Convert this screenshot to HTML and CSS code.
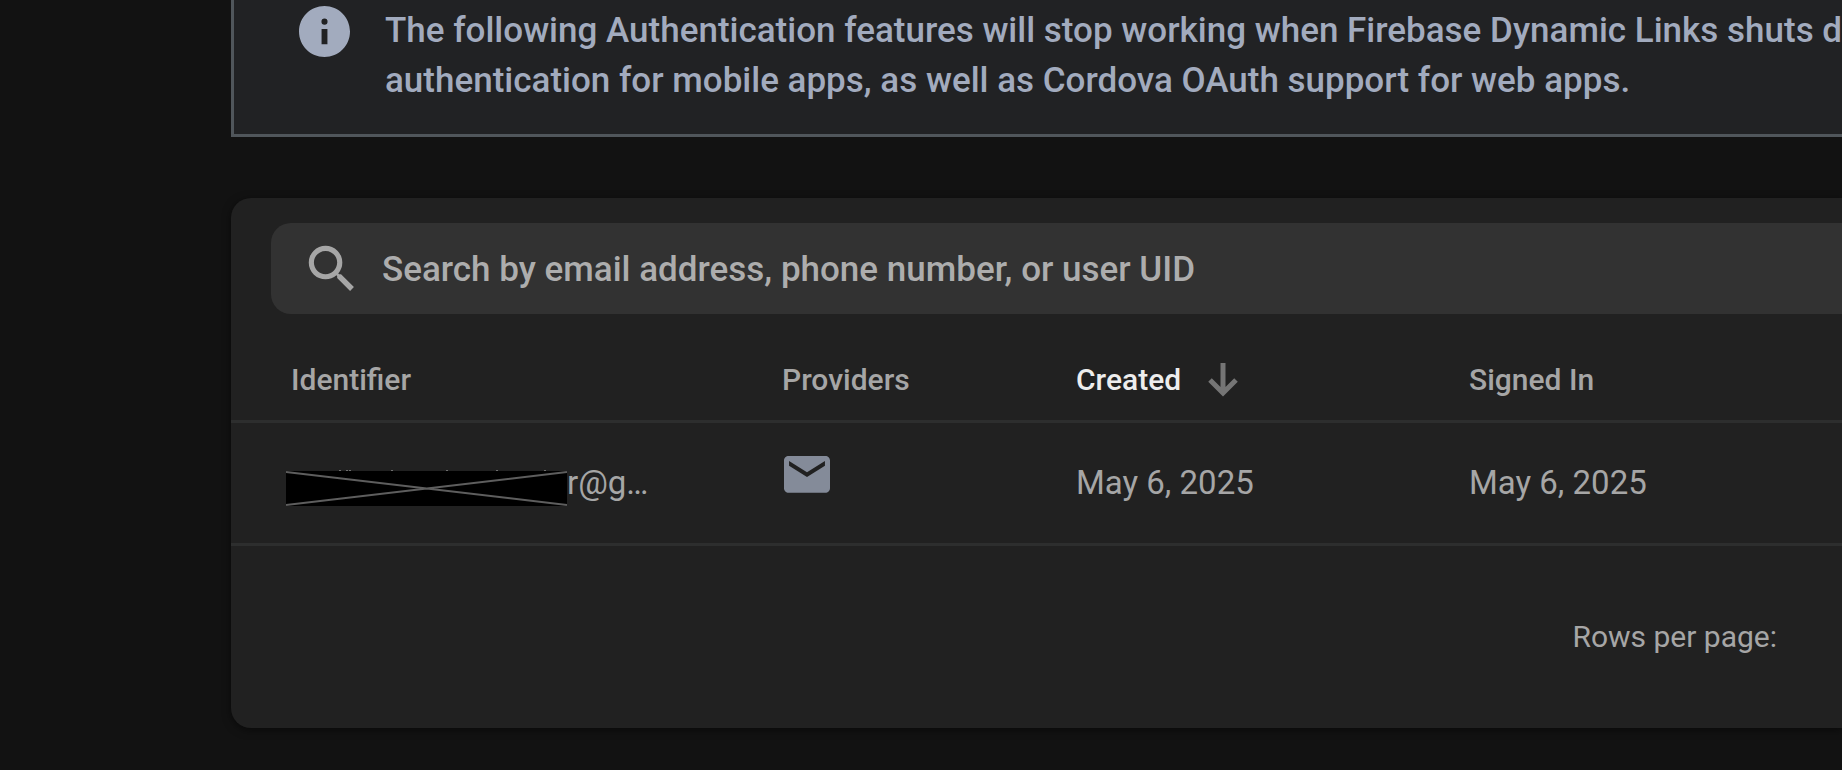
FILE: index.html
```html
<!DOCTYPE html>
<html lang="en">
<head>
<meta charset="utf-8">
<title>Authentication - Users</title>
<link rel="stylesheet" href="styles.css">
</head>
<body>
<main class="page">
  <section class="notice">
    <svg class="notice-icon" viewBox="2 2 20 20" aria-hidden="true"><path d="M12 2C6.480 2 2 6.480 2 12s4.480 10 10 10 10-4.480 10-10S17.520 2 12 2zm1.150 15h-2.300v-6h2.300v6zm-1.150-7.650a1.200 1.200 0 1 1 0-2.400 1.200 1.200 0 0 1 0 2.400z"/></svg>
    <p class="notice-text">The following Authentication features will stop working when Firebase Dynamic Links shuts down:<br>authentication for mobile apps, as well as Cordova OAuth support for web apps.</p>
  </section>
  <section class="card">
    <label class="search">
      <svg class="search-icon" viewBox="0 0 24 24" aria-hidden="true"><path d="M15.500 14h-.790l-.280-.270A6.471 6.471 0 0 0 16 9.500 6.500 6.500 0 1 0 9.500 16c1.610 0 3.090-.590 4.230-1.570l.270.280v.790l5 4.990L20.490 19l-4.990-5zm-6 0C7.010 14 5 11.990 5 9.500S7.010 5 9.500 5 14 7.010 14 9.500 11.990 14 9.500 14z"/></svg>
      <input class="search-input" type="text" aria-label="Search users" placeholder="Search by email address, phone number, or user UID">
    </label>
    <table class="users">
      <colgroup><col class="col-identifier"><col class="col-providers"><col class="col-created"><col></colgroup>
      <thead>
        <tr>
          <th scope="col">Identifier</th>
          <th scope="col">Providers</th>
          <th scope="col" aria-sort="descending"><button class="sort" type="button">Created<svg class="sort-icon" viewBox="0 0 30 34" aria-hidden="true"><path d="M15 0v29M2 17l13 13 13-13"/></svg></button></th>
          <th scope="col">Signed In</th>
        </tr>
      </thead>
      <tbody>
        <tr>
          <td>
            <span class="identifier">
              <svg class="redaction" viewBox="0 0 281 38" aria-hidden="true"><path class="ascenders" d="M54 2v2M61 2v2h3v-2M106 2v2M161 2v2M211 2v2M259 2v2"/><path class="block" d="M0 3h281v35H0z"/><path class="cross" d="M0 4l281 33M0 37l281-33"/></svg>r@g…
            </span>
          </td>
          <td class="provider"><svg class="mail-icon" viewBox="2 4 20 16" role="img" aria-label="Email"><path d="M20 4H4c-1.100 0-2 .900-2 2v12c0 1.100.900 2 2 2h16c1.100 0 2-.900 2-2V6c0-1.100-.900-2-2-2zm-.200 4.250L12 13.100 4.200 8.250V6.200L12 11.050l7.800-4.850z"/></svg></td>
          <td>May 6, 2025</td>
          <td>May 6, 2025</td>
        </tr>
      </tbody>
    </table>
    <footer class="pager">Rows per page:</footer>
  </section>
</main>
</body>
</html>
```
FILE: styles.css
```css
body {
  margin: 0;
  background: #121212;
  color: #a6a6a6;
  font-family: Roboto, "Liberation Sans", sans-serif;
  overflow: hidden;
}

.page {
  min-height: 100vh;
  padding-left: 231px;
}

.notice {
  display: flex;
  align-items: flex-start;
  gap: 35px;
  padding: 6px 0 28px 65px;
  border: 3px solid #50565b;
  border-width: 0 0 3px 3px;
  background: #212224;
  color: #a2abbe;
  overflow: hidden;
}

.notice-icon {
  flex: none;
  width: 51px;
  fill: currentColor;
}

.notice-text {
  margin: 0;
  font-size: 35px;
  font-weight: 500;
  line-height: 50px;
  white-space: nowrap;
}

.card {
  margin-top: 61px;
  padding-top: 25px;
  border-radius: 20px 0 0 20px;
  background: #212121;
  box-shadow: 0 2px 8px rgba(0, 0, 0, 0.5);
}

.search {
  display: flex;
  align-items: center;
  gap: 19px;
  height: 91px;
  margin-left: 40px;
  padding-left: 30px;
  border-radius: 20px 0 0 20px;
  background: #323232;
}

.search-icon {
  flex: none;
  width: 62px;
  fill: #a6a6a6;
}

.search-input {
  flex: 1;
  min-width: 0;
  padding: 2px 0 0;
  border: 0;
  outline: 0;
  background: none;
  color: #e8e8e8;
  font: 500 35px/44px Roboto, "Liberation Sans", sans-serif;
}

.search-input::placeholder {
  color: #adadad;
  opacity: 1;
}

.users {
  width: 100%;
  table-layout: fixed;
  border-collapse: separate;
  border-spacing: 0;
  font-size: 33px;
  line-height: 40px;
}

.col-identifier {
  width: 551px;
}

.col-providers {
  width: 294px;
}

.col-created {
  width: 393px;
}

th,
td {
  padding: 40px 0;
  border-bottom: 3px solid #2d2e2e;
  text-align: left;
  white-space: nowrap;
  vertical-align: top;
}

th {
  padding: 48px 0 22px;
  font-size: 30px;
  font-weight: 500;
  line-height: 36px;
}

th:first-child {
  padding-left: 60px;
}

td:first-child {
  padding-left: 55px;
}

.sort {
  display: flex;
  align-items: center;
  gap: 27px;
  padding: 0;
  border: 0;
  background: none;
  color: #ededed;
  font: inherit;
}

.sort-icon {
  width: 30px;
  fill: none;
  stroke: #757575;
  stroke-width: 5;
}

.identifier {
  display: flex;
  align-items: center;
}

.redaction {
  flex: none;
  width: 281px;
  margin: 5px 0 -3px;
}

.ascenders {
  fill: none;
  stroke: #6e6e6e;
  stroke-width: 2;
}

.block {
  fill: #000;
}

.cross {
  fill: none;
  stroke: #5e5e5e;
  stroke-width: 2;
}

.provider {
  padding: 33px 0 0 2px;
}

.mail-icon {
  display: block;
  width: 46px;
  fill: #848b99;
}

.pager {
  padding: 73px 65px;
  font-size: 30px;
  line-height: 36px;
  text-align: right;
}
```
